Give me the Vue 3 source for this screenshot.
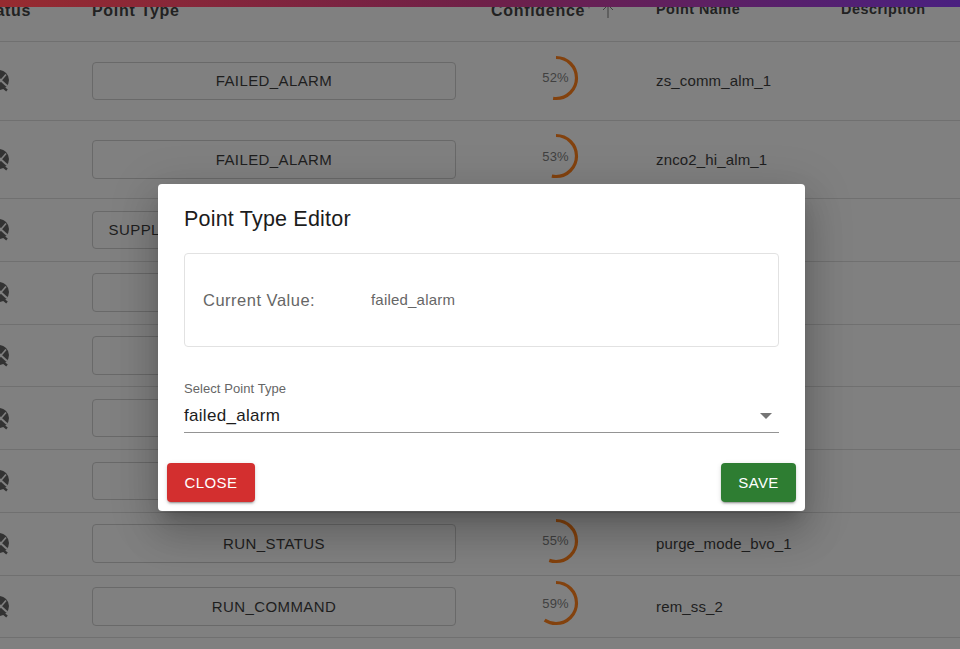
<script setup>
const rows = [
  { type: 'FAILED_ALARM', pct: 52, name: 'zs_comm_alm_1', tall: true },
  { type: 'FAILED_ALARM', pct: 53, name: 'znco2_hi_alm_1', tall: true },
  { type: 'SUPPLY_AIR_TEMPERATURE_SENSOR_FLT', pct: 54, name: 'supply_air_temp_lims' },
  { type: 'RUN_STATUS', pct: 54, name: 'fan_run_bvo_1' },
  { type: 'RUN_STATUS', pct: 54, name: 'pump_run_bvo_1' },
  { type: 'RUN_COMMAND', pct: 55, name: 'rem_ss_1' },
  { type: 'RUN_STATUS', pct: 55, name: 'heat_mode_bvo_1' },
  { type: 'RUN_STATUS', pct: 55, name: 'purge_mode_bvo_1' },
  { type: 'RUN_COMMAND', pct: 59, name: 'rem_ss_2' },
]
const r = 20.5
const circumference = 2 * Math.PI * r
const dash = (pct) => `${(pct / 100) * circumference} ${circumference}`
</script>

<template>
  <div class="page">
    <div class="topbar"></div>
    <div class="table">
      <div class="row head">
        <div class="h status-h">Status</div>
        <div class="h">Point Type</div>
        <div class="h conf-h">
          <span>Confidence</span>
          <svg class="sort" width="26" height="16" viewBox="0 0 26 16">
            <path d="M1 2.5v3" fill="none" stroke="#555" stroke-width="1" />
            <path d="M20 15V2M15 7l5-5 5 5" fill="none" stroke="#3f3f3f" stroke-width="1" />
          </svg>
        </div>
        <div class="h up">Point Name</div>
        <div class="h up">Description</div>
      </div>
      <div v-for="(row, i) in rows" :key="i" class="row" :class="{ tall: row.tall }">
        <div class="status">
          <svg width="22" height="22" viewBox="0 0 22 22">
            <circle cx="9" cy="10" r="10" fill="#333" />
            <path d="M6 6l11 10" stroke="#808080" stroke-width="2" />
            <path d="M16 4.5L7 15" stroke="#808080" stroke-width="1.6" />
            <path d="M9 14l8 6.5" stroke="#333" stroke-width="2.4" />
          </svg>
        </div>
        <div class="type"><div class="type-btn">{{ row.type }}</div></div>
        <div class="conf">
          <div class="ring">
            <svg width="46" height="46" viewBox="0 0 46 46">
              <circle
                class="arc"
                cx="23"
                cy="23"
                :r="r"
                :stroke-dasharray="dash(row.pct)"
              />
            </svg>
            <span class="pct">{{ row.pct }}%</span>
          </div>
        </div>
        <div class="name">{{ row.name }}</div>
        <div></div>
      </div>
    </div>

    <div class="overlay">
      <div class="dialog">
        <h2 class="title">Point Type Editor</h2>
        <div class="card">
          <span class="cur-label">Current Value:</span>
          <span class="cur-value">failed_alarm</span>
        </div>
        <div class="field">
          <div class="field-label">Select Point Type</div>
          <div class="select">
            <span>failed_alarm</span>
            <svg class="caret" width="12" height="6" viewBox="0 0 12 6"><path d="M0 0h12L6 6z" fill="#757575" /></svg>
          </div>
        </div>
        <div class="actions">
          <button class="btn close">Close</button>
          <button class="btn save">Save</button>
        </div>
      </div>
    </div>
  </div>
</template>

<style scoped>
.page {
  position: relative;
  width: 960px;
  height: 649px;
  overflow: hidden;
  background: #808080;
  font-family: "Liberation Sans", Arial, sans-serif;
  color: #1e1e1e;
}
.topbar {
  height: 7px;
  background: linear-gradient(90deg, #972b30 0%, #6f2048 50%, #4a2080 100%);
}
.table {
  width: 960px;
}
.row {
  display: grid;
  grid-template-columns: 92px 364px 200px 185px 119px;
  height: 62.75px;
  align-items: center;
  border-bottom: 1px solid #707070;
  box-sizing: border-box;
}
.row.tall {
  height: 78.5px;
}
.row.head {
  height: 35px;
  align-items: start;
  overflow: hidden;
}
.h {
  font-size: 16px;
  font-weight: 700;
  letter-spacing: 0.7px;
  line-height: 20px;
  margin-top: -6px;
  white-space: nowrap;
  color: #222;
}
.h.up {
  margin-top: -8px;
  font-size: 14.4px;
  letter-spacing: 0.5px;
}
.status-h {
  margin-left: -22px;
}
.conf-h {
  display: flex;
  align-items: center;
  gap: 3px;
  margin-left: 35px;
}
.status {
  margin-left: -10px;
  height: 22px;
  margin-top: 1px;
}
.type-btn {
  height: 38.5px;
  box-sizing: border-box;
  border: 1px solid #696969;
  border-radius: 4px;
  display: flex;
  align-items: center;
  justify-content: center;
  font-size: 15px;
  letter-spacing: 0.4px;
  white-space: nowrap;
  overflow: hidden;
}
.conf {
  display: flex;
  padding-left: 77px;
  margin-top: -6px;
}
.ring {
  position: relative;
  width: 46px;
  height: 46px;
}
.ring svg {
  display: block;
  transform: rotate(-90deg);
}
.arc {
  fill: none;
  stroke: #83420e;
  stroke-width: 3.2;
}
.pct {
  position: absolute;
  inset: 0;
  display: flex;
  align-items: center;
  justify-content: center;
  font-size: 13px;
  letter-spacing: 0.1px;
  color: #404040;
  padding-right: 1px;
}
.name {
  font-size: 15px;
  letter-spacing: 0.15px;
  white-space: nowrap;
}
.overlay {
  position: absolute;
  inset: 0;
  padding: 184px 0 0 158px;
  box-sizing: border-box;
}
.dialog {
  width: 647px;
  height: 327px;
  box-sizing: border-box;
  background: #fff;
  border-radius: 4px;
  padding: 0 9px 9px;
  display: flex;
  flex-direction: column;
  box-shadow: 0 11px 15px -7px rgba(0, 0, 0, 0.2), 0 24px 38px 3px rgba(0, 0, 0, 0.14), 0 9px 46px 8px rgba(0, 0, 0, 0.12);
}
.title {
  margin: 22px 0 0 17px;
  font-size: 21.5px;
  line-height: 26px;
  font-weight: 400;
  letter-spacing: 0.2px;
  color: #1c1c1c;
}
.card {
  margin: 21px 17px 0;
  height: 94px;
  box-sizing: border-box;
  border: 1px solid #e2e2e2;
  border-radius: 4px;
  display: flex;
  align-items: center;
  padding-left: 18px;
}
.cur-label {
  width: 168px;
  font-size: 16.5px;
  letter-spacing: 0.5px;
  color: #666;
}
.cur-value {
  font-size: 15px;
  letter-spacing: 0.2px;
  color: #666;
  margin-bottom: 2px;
}
.field {
  margin: 34px 17px 0;
}
.field-label {
  font-size: 13px;
  letter-spacing: 0.07px;
  line-height: 15px;
  color: #666;
}
.select {
  display: flex;
  align-items: center;
  justify-content: space-between;
  height: 37px;
  padding-top: 4px;
  box-sizing: border-box;
  border-bottom: 1px solid #949494;
  font-size: 17px;
  letter-spacing: 0.3px;
  color: #1c1c1c;
  padding-right: 7px;
}
.actions {
  margin-top: auto;
  display: flex;
  justify-content: space-between;
}
.btn {
  height: 39px;
  border: none;
  border-radius: 4px;
  color: #fff;
  font-family: inherit;
  font-size: 15px;
  letter-spacing: 0.4px;
  text-transform: uppercase;
  box-shadow: 0 3px 1px -2px rgba(0, 0, 0, 0.2), 0 2px 2px rgba(0, 0, 0, 0.14), 0 1px 5px rgba(0, 0, 0, 0.12);
}
.close {
  width: 88px;
  background: #d32f2f;
}
.save {
  width: 75px;
  background: #2e7d32;
}
</style>
